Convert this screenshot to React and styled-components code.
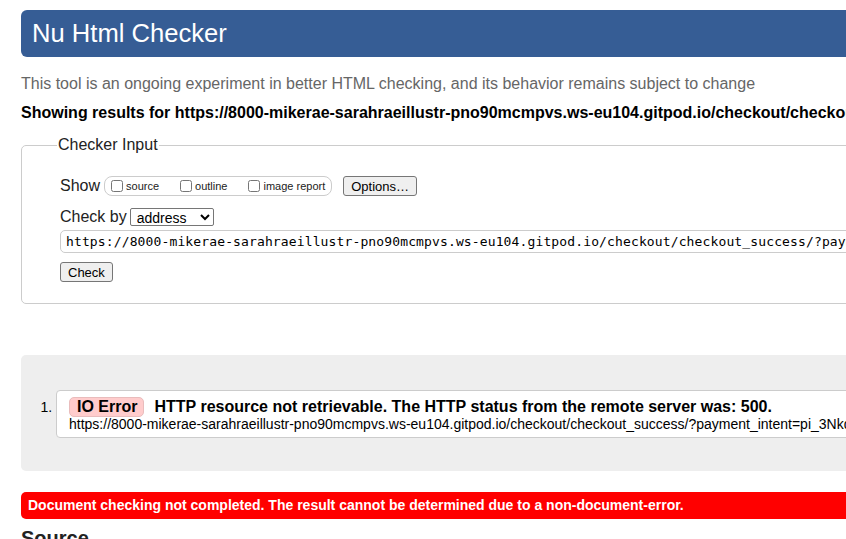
import styled, { createGlobalStyle } from 'styled-components';

const Global = createGlobalStyle`
  html, body {
    margin: 0;
    overflow: hidden;
    background: #fff;
  }
  body {
    font-family: "Liberation Sans", Arial, sans-serif;
    color: #000;
  }
`;

const Page = styled.div`
  width: 1240px;
  padding: 10px 0 0 21px;
`;

const Title = styled.h1`
  margin: 0;
  height: 47px;
  line-height: 47px;
  padding-left: 11px;
  background: #365d95;
  color: #fff;
  font-size: 25.6px;
  font-weight: normal;
  border-radius: 6px;
`;

const Intro = styled.p`
  margin: 18px 0 0;
  font-size: 16px;
  line-height: 18px;
  color: #666;
`;

const ResultsFor = styled.p`
  margin: 11px 0 0;
  font-size: 16px;
  line-height: 18px;
  font-weight: bold;
  white-space: nowrap;
`;

const InputSet = styled.fieldset`
  margin: 14px 0 0;
  padding: 12px 0 21px 38px;
  border: 1px solid #ccc;
  border-radius: 5px;
  min-width: 0;
`;

const Legend = styled.legend`
  padding: 0 1px;
  margin-left: -3px;
  font-size: 16px;
  line-height: 18px;
  color: #222;
`;

const Row = styled.div`
  display: flex;
  align-items: center;
  margin-top: ${p => p.$top || 0}px;
  font-size: 16px;
`;

const Label = styled.span`
  font-size: 16px;
  line-height: 18px;
  color: #222;
`;

const ShowGroup = styled.span`
  display: inline-flex;
  align-items: center;
  height: 18px;
  margin-left: 4px;
  padding: 0 6px;
  border: 1px solid #ccc;
  border-radius: 8px;
  gap: 21px;
`;

const Option = styled.label`
  display: inline-flex;
  align-items: center;
  font-size: 11px;
  color: #222;
  gap: 3px;
`;

const Box = styled.input`
  margin: 0;
  width: 12px;
  height: 12px;
`;

const Button = styled.button`
  font-family: "Liberation Sans", Arial, sans-serif;
  font-size: 13px;
  height: 20px;
  padding: 0 7px;
  border: 1px solid #767676;
  border-radius: 3px;
  background: #efefef;
  color: #000;
  margin-left: ${p => p.$left || 0}px;
`;

const Select = styled.select`
  margin-left: 3px;
  width: 84px;
  height: 18px;
  font-family: "Liberation Sans", Arial, sans-serif;
  font-size: 14px;
  border: 1px solid #767676;
  border-radius: 2px;
  background: #fff;
  padding: 0 2px;
`;

const UrlField = styled.input`
  display: block;
  box-sizing: border-box;
  margin-top: 4px;
  width: 1160px;
  height: 23px;
  padding: 0 5px 1px;
  border: 1px solid #ccc;
  border-radius: 5px;
  font-family: "DejaVu Sans Mono", monospace;
  font-size: 13px;
  letter-spacing: 0.13px;
  color: #000;
`;

const Results = styled.div`
  margin-top: 51px;
  padding: 35px 0 33px;
  background: #eee;
  border-radius: 5px;
`;

const List = styled.ol`
  margin: 0;
  padding-left: 35px;
  font-size: 13px;
`;

const Message = styled.li`
  padding: 6px 12px 5px;
  background: #fff;
  border: 1px solid #ccc;
  border-radius: 4px;
  white-space: nowrap;
  &::marker {
    font-size: 14px;
  }
`;

const Headline = styled.p`
  margin: 0;
  display: flex;
  align-items: center;
  gap: 10px;
  font-size: 16px;
  font-weight: bold;
`;

const Badge = styled.strong`
  display: inline-block;
  padding: 0 6px 0 7px;
  line-height: 18px;
  background: #fcc;
  border: 1px solid #e9bcbc;
  border-radius: 5px;
  font-size: 16px;
`;

const Location = styled.p`
  margin: 0;
  font-size: 14px;
  line-height: 15px;
`;

const Failure = styled.p`
  margin: 21px 0 0;
  height: 27px;
  line-height: 27px;
  padding-left: 7px;
  background: #f00;
  color: #fff;
  font-size: 14px;
  font-weight: bold;
  border-radius: 5px;
`;

const SectionHead = styled.h2`
  margin: 7px 0 0;
  font-size: 20px;
  line-height: 24px;
  color: #222;
`;

const url =
  'https://8000-mikerae-sarahraeillustr-pno90mcmpvs.ws-eu104.gitpod.io/checkout/checkout_success/?payment_intent=pi_3NkqLmB2xYtR0aZk1cV7';

export default function App() {
  return (
    <>
      <Global />
      <Page>
        <Title>Nu Html Checker</Title>
        <Intro>
          This tool is an ongoing experiment in better HTML checking, and its behavior remains subject to change
        </Intro>
        <ResultsFor>Showing results for {url}</ResultsFor>

        <InputSet>
          <Legend>Checker Input</Legend>
          <Row $top={10}>
            <Label>Show</Label>
            <ShowGroup>
              <Option><Box type="checkbox" />source</Option>
              <Option><Box type="checkbox" />outline</Option>
              <Option><Box type="checkbox" />image report</Option>
            </ShowGroup>
            <Button $left={11}>Options…</Button>
          </Row>
          <Row $top={12}>
            <Label>Check by</Label>
            <Select defaultValue="address">
              <option value="address">address</option>
              <option value="file">file upload</option>
              <option value="textarea">text input</option>
            </Select>
          </Row>
          <UrlField defaultValue={url} />
          <Row $top={9}>
            <Button>Check</Button>
          </Row>
        </InputSet>

        <Results>
          <List>
            <Message>
              <Headline>
                <Badge>IO Error</Badge>
                HTTP resource not retrievable. The HTTP status from the remote server was: 500.
              </Headline>
              <Location>{url}</Location>
            </Message>
          </List>
        </Results>

        <Failure>
          Document checking not completed. The result cannot be determined due to a non-document-error.
        </Failure>
        <SectionHead>Source</SectionHead>
      </Page>
    </>
  );
}
